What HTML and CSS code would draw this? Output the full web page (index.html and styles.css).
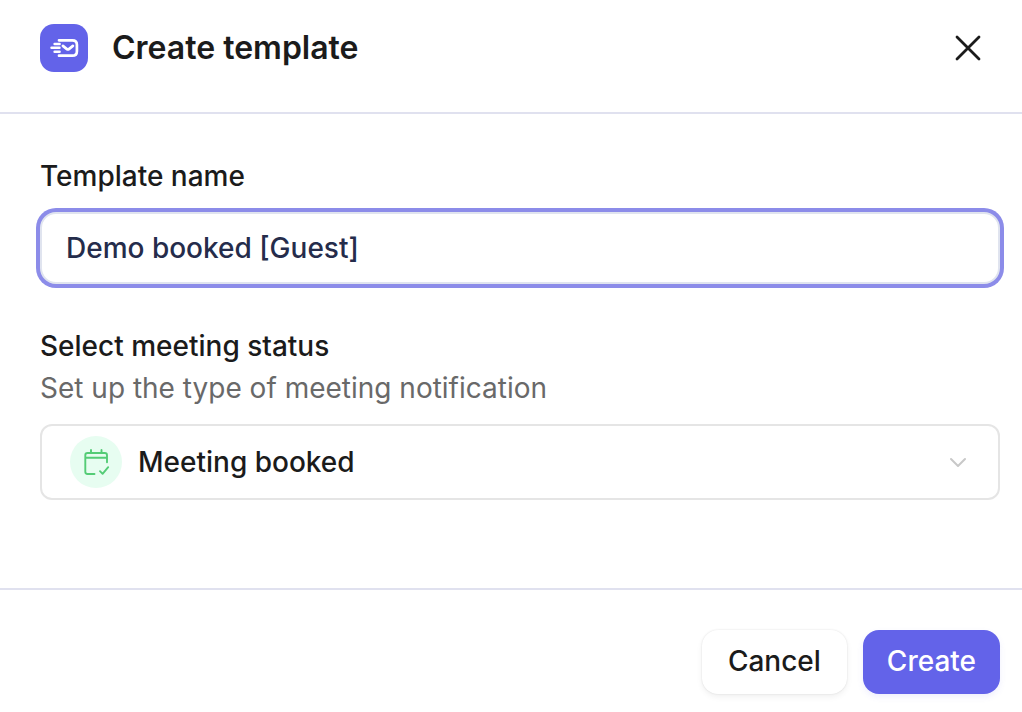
FILE: index.html
```html
<!DOCTYPE html>
<html lang="en">
<head>
<meta charset="utf-8">
<meta name="viewport" content="width=device-width, initial-scale=1">
<title>Create template</title>
<link rel="stylesheet" href="styles.css">
</head>
<body>
<form class="dialog">
  <header class="dialog-header">
    <svg class="logo" viewBox="0 0 48 48" aria-hidden="true">
      <rect width="48" height="48" rx="14" fill="#6363e9"/>
      <g fill="none" stroke="#fff" stroke-width="2.7" stroke-linecap="round" stroke-linejoin="round">
        <path d="M19 16.300h13.400q4.500 0 4.500 4.500v6.400q0 4.500-4.500 4.500H19"/>
        <path d="M22.900 21.900l4 3.200q1 .7 2 0l4-3.200"/>
        <path d="M14.600 19.900h5M11.500 23.800h8M14.600 27.700h5" stroke-width="2.500"/>
      </g>
    </svg>
    <h1 class="title">Create template</h1>
    <button class="close" type="button" aria-label="Close">
      <svg class="close-icon" viewBox="0 0 28 28" aria-hidden="true"><path d="M3 3l22 22M25 3L3 25"/></svg>
    </button>
  </header>
  <main class="dialog-body">
    <div class="field">
      <label class="label" for="name">Template name</label>
      <input class="control text-input" id="name" type="text" value="Demo booked [Guest]">
    </div>
    <div class="field">
      <div class="label-group">
        <label class="label" for="status">Select meeting status</label>
        <p class="hint" id="status-hint">Set up the type of meeting notification</p>
      </div>
      <div class="select-wrap">
        <select class="control select" id="status" aria-describedby="status-hint">
          <option>Meeting booked</option>
        </select>
        <svg class="status-icon" viewBox="0 0 52 52" aria-hidden="true">
          <circle cx="26" cy="26" r="26" fill="#e7fdf1"/>
          <path d="M24.500 38h-7q-2.200 0-2.200-2.200V19.200q0-2.200 2.200-2.200h17.300q2.200 0 2.200 2.200V26.300M15.300 21.800H37M21 14V17M31.500 14V17M30 35.200l2.600 2.600 5.600-6.600" fill="none" stroke="#54cc76" stroke-width="1.900" stroke-linecap="round" stroke-linejoin="round"/>
        </svg>
        <svg class="chevron" viewBox="0 0 18 18" aria-hidden="true"><path d="M2 6l7 7 7-7"/></svg>
      </div>
    </div>
  </main>
  <footer class="dialog-footer">
    <button class="button" type="button">Cancel</button>
    <button class="button primary" type="button">Create</button>
  </footer>
</form>
</body>
</html>
```
FILE: styles.css
```css
* { box-sizing: border-box; }

body {
  margin: 0;
  background: #fff;
  color: #1b1b1b;
  font-family: Inter, "Liberation Sans", sans-serif;
  font-size: 28px;
  line-height: 40px;
}

.dialog {
  display: flex;
  flex-direction: column;
  min-height: 100vh;
}

.dialog-header {
  display: flex;
  align-items: center;
  gap: 24px;
  padding: 24px 40px 40px;
  border-bottom: 2px solid #e0e1ef;
}

.logo { width: 48px; height: 48px; flex: none; }

.title {
  flex: 1;
  margin: 0;
  font-size: 32px;
  font-weight: 600;
  line-height: 48px;
}

.close {
  display: flex;
  padding: 0;
  border: 0;
  background: none;
}

.close-icon {
  width: 28px;
  height: 28px;
  fill: none;
  stroke: #1b1b1b;
  stroke-width: 2.8;
  stroke-linecap: round;
}

.dialog-body {
  flex: 1;
  display: flex;
  flex-direction: column;
  gap: 42px;
  padding: 42px 22px 40px 40px;
}

.field {
  display: flex;
  flex-direction: column;
  gap: 16px;
}

.label { font-weight: 500; }

.label-group {
  display: flex;
  flex-direction: column;
  gap: 2px;
}

.hint {
  margin: 0;
  color: #696969;
}

.control {
  width: 100%;
  border: 2px solid #e5e5e5;
  border-radius: 12px;
  background: #fff;
  color: inherit;
  font: inherit;
  font-weight: 500;
  outline: 0;
}

.text-input {
  height: 72px;
  padding: 0 24px;
  border-color: #e0e4ef;
  border-radius: 16px;
  box-shadow: 0 0 0 4px #8c8ce9;
  color: #252c4b;
}

.select-wrap { position: relative; display: flex; }

.select {
  height: 76px;
  padding: 0 64px 0 96px;
  appearance: none;
}

.status-icon {
  position: absolute;
  left: 30px;
  top: 12px;
  width: 52px;
  height: 52px;
  pointer-events: none;
}

.chevron {
  position: absolute;
  right: 33px;
  top: 29px;
  width: 18px;
  height: 18px;
  fill: none;
  stroke: #c8c8c8;
  stroke-width: 2;
  stroke-linecap: round;
  stroke-linejoin: round;
  pointer-events: none;
}

.dialog-footer {
  display: flex;
  justify-content: flex-end;
  gap: 16px;
  padding: 40px 22px 18px;
  border-top: 2px solid #e0e1ef;
}

.button {
  height: 64px;
  padding: 0 26px 2px;
  border: 0;
  border-radius: 16px;
  background: #fff;
  box-shadow: 0 0 2px rgba(0, 0, 0, 0.12), 0 3px 6px rgba(0, 0, 0, 0.06);
  color: inherit;
  font: inherit;
  font-weight: 500;
}

.primary {
  padding: 0 24px 2px;
  background: #6363e9;
  box-shadow: 0 3px 6px rgba(99, 99, 233, 0.1);
  color: #fff;
}
```
